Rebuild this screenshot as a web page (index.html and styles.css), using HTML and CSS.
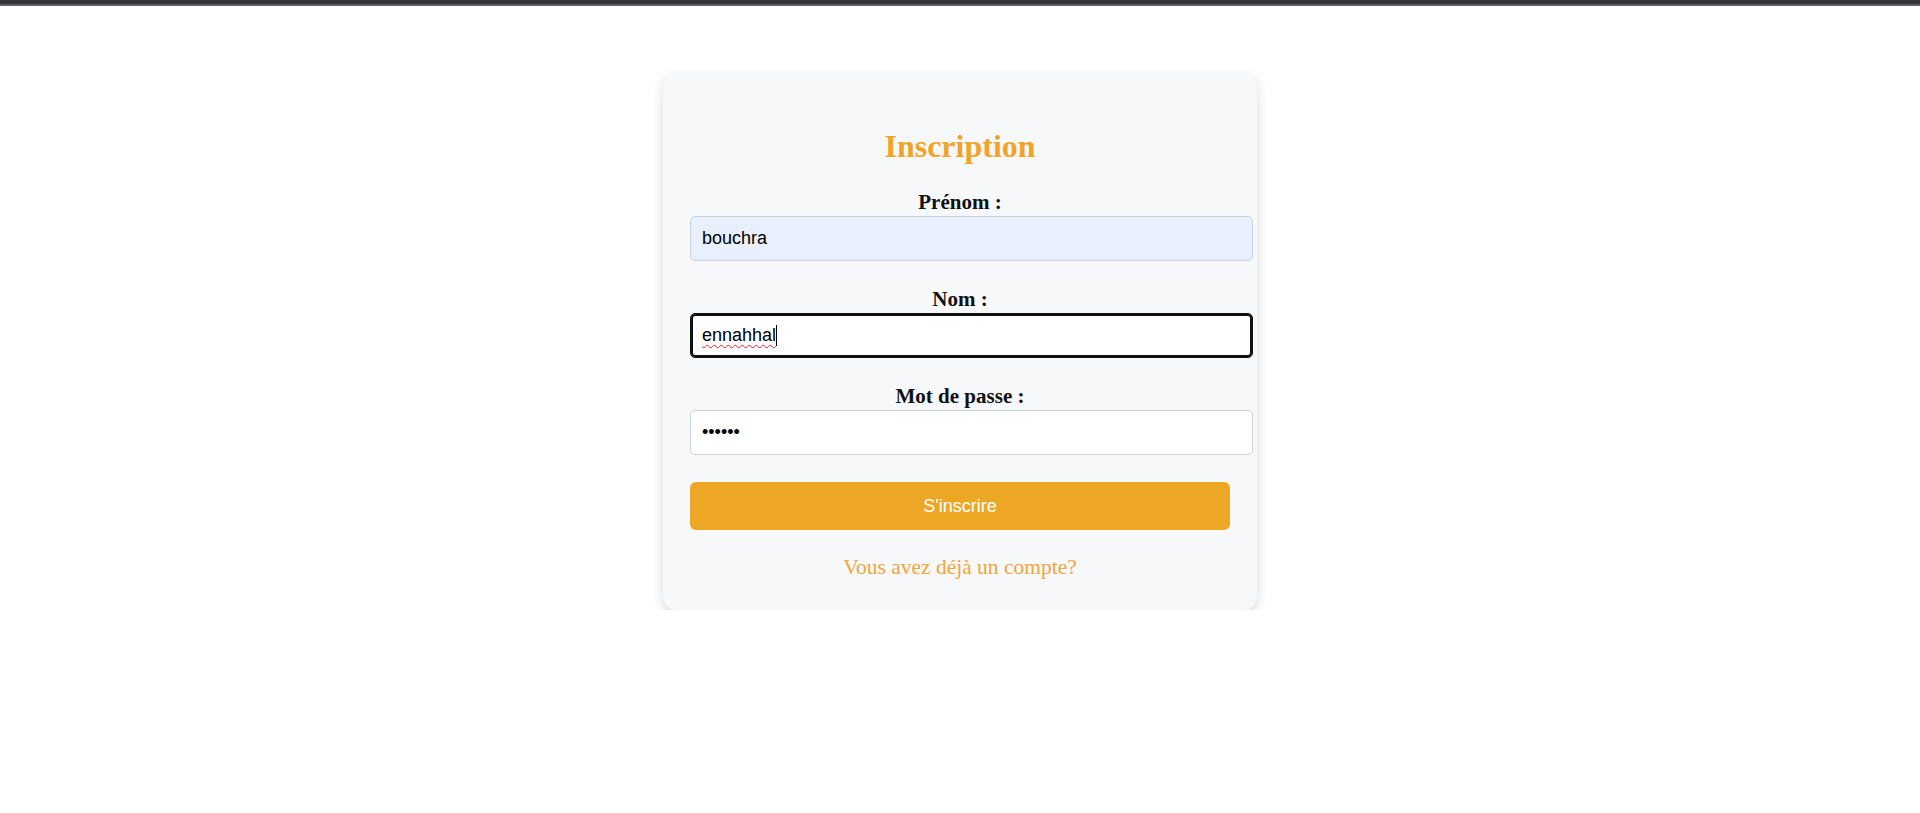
FILE: index.html
```html
<!DOCTYPE html>
<html lang="fr">
<head>
<meta charset="utf-8">
<title>Inscription</title>
<link rel="stylesheet" href="styles.css">
</head>
<body>
<div class="topbar"></div>
<main class="page">
  <form class="card">
    <h1 class="title">Inscription</h1>
    <div class="field">
      <label class="label" for="prenom">Prénom :</label>
      <input class="input input-autofill" id="prenom" type="text" value="bouchra">
    </div>
    <div class="field">
      <label class="label">Nom :</label>
      <div class="input input-focused"><span class="misspelled">ennahhal</span><span class="caret"></span></div>
    </div>
    <div class="field">
      <label class="label" for="pass">Mot de passe :</label>
      <input class="input" id="pass" type="password" value="123456">
    </div>
    <button class="submit" type="button">S'inscrire</button>
    <a class="link" href="#">Vous avez déjà un compte?</a>
  </form>
</main>
</body>
</html>
```
FILE: styles.css
```css
html, body {
  margin: 0;
  padding: 0;
  background: #ffffff;
}

.topbar {
  height: 4px;
  background: #353538;
  border-bottom: 2px solid #5e5e60;
}

.page {
  display: flex;
  justify-content: center;
  padding-top: 66px;
}

.card {
  width: 540px;
  padding: 27px 27px 31px;
  background: #f7f8fa;
  border-radius: 14px;
  box-shadow: 0 5px 12px rgba(0, 0, 0, 0.14);
  display: flex;
  flex-direction: column;
  align-items: stretch;
}

.title {
  margin: 29px 0 27px;
  font-family: "Liberation Serif", "Times New Roman", serif;
  font-weight: bold;
  font-size: 32px;
  line-height: 36px;
  color: #f0a52a;
  text-align: center;
}

.field {
  display: flex;
  flex-direction: column;
  margin-bottom: 27px;
}

.label {
  display: block;
  margin-bottom: 2px;
  font-family: "Liberation Serif", "Times New Roman", serif;
  font-weight: bold;
  font-size: 21px;
  line-height: 23px;
  color: #111111;
  text-align: center;
}

.input {
  box-sizing: border-box;
  width: 563px;
  height: 45px;
  margin: 0;
  padding: 0 11px;
  border: 1px solid #cdd1d8;
  border-radius: 5px;
  background: #ffffff;
  font-family: "Liberation Sans", Arial, sans-serif;
  font-size: 18px;
  color: #000000;
  outline: none;
}

.input-autofill {
  background: #e8f0fe;
}

.input-focused {
  display: flex;
  align-items: center;
  border-color: #101010;
  box-shadow: inset 0 0 0 2px #101010;
}

.misspelled {
  text-decoration: underline wavy #e0242a;
  text-decoration-thickness: 1px;
  text-underline-offset: 3px;
}

.caret {
  display: inline-block;
  width: 1px;
  height: 21px;
  background: #000000;
}

.submit {
  height: 48px;
  margin: 0 0 26px;
  padding: 0;
  border: none;
  border-radius: 6px;
  background: #eda724;
  color: #ffffff;
  font-family: "Liberation Sans", Arial, sans-serif;
  font-size: 18px;
  cursor: pointer;
}

.link {
  display: block;
  font-family: "Liberation Serif", "Times New Roman", serif;
  font-size: 21.5px;
  line-height: 23px;
  color: #f0a53c;
  text-decoration: none;
  text-align: center;
}
```
